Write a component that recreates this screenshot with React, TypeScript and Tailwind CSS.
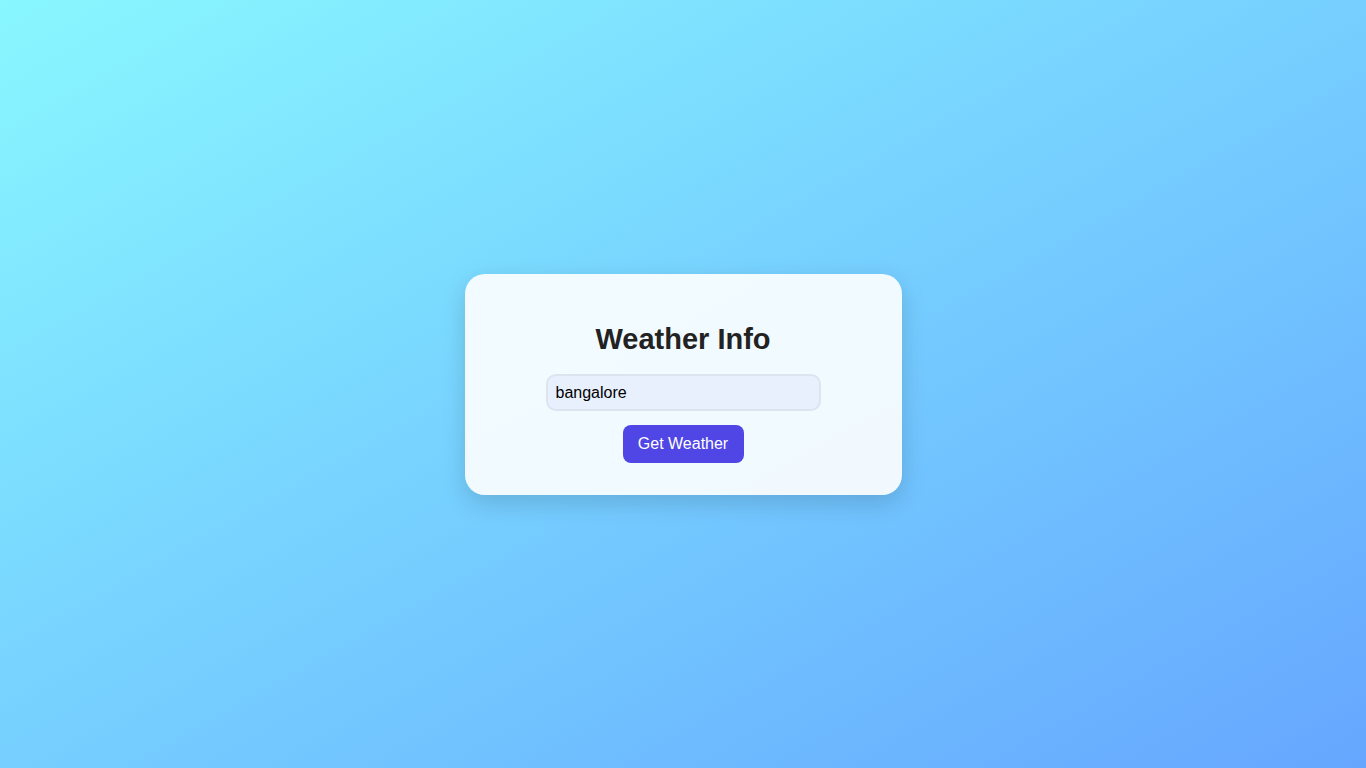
import { useState } from 'react';

export default function App() {
    const [city, setCity] = useState('bangalore');

    return (
        <div className="min-h-screen w-full flex items-center justify-center bg-linear-to-br from-[#89f7fe] to-[#66a6ff] font-['Liberation_Sans',Arial,sans-serif]">
            {/* Card */}
            <div className="w-[437px] rounded-[20px] bg-white/90 pt-[49px] pb-8 flex flex-col items-center shadow-[0_8px_24px_rgba(0,0,0,0.15)]">
                <h2 className="text-[29px] leading-8 font-bold text-[#222]">Weather Info</h2>
                <input
                    autoFocus
                    value={city}
                    onChange={e => setCity(e.target.value)}
                    className="mt-[19px] w-[275px] h-[37px] pl-2 pr-2.5 pt-0.5 rounded-[10px] bg-[#e8f0fe] border-2 border-[#dde4f0] text-base text-black outline-none caret-black"
                />
                <button className="mt-[14px] w-[121px] h-[38px] rounded-lg bg-[#4f46e5] text-white text-base">
                    Get Weather
                </button>
            </div>
        </div>
    );
}
